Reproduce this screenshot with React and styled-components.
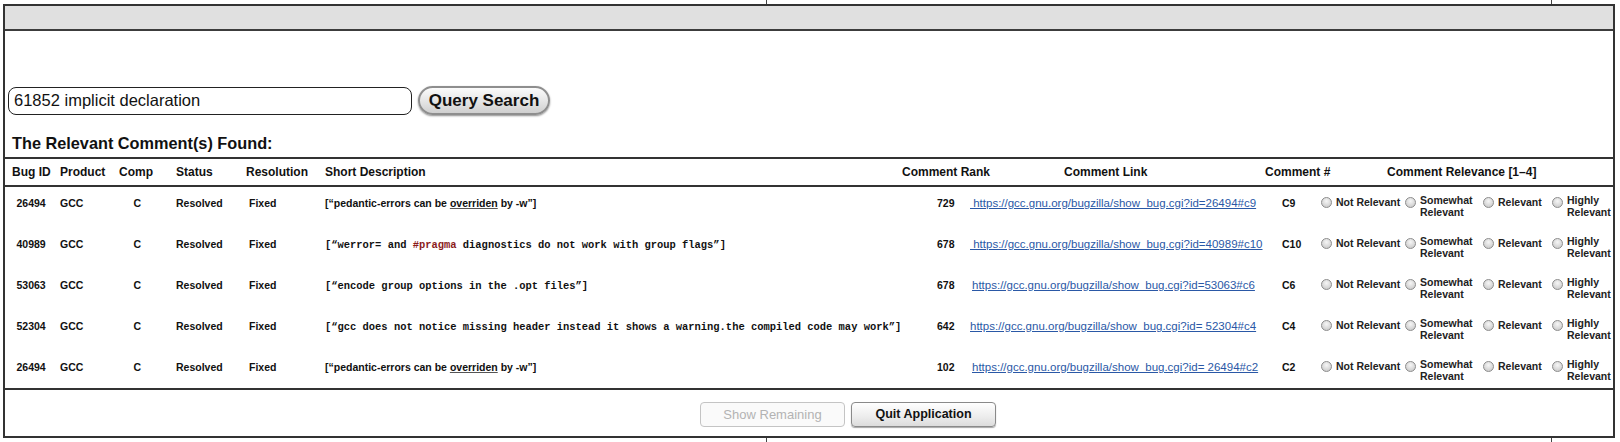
import React from "react";
import styled, { createGlobalStyle } from "styled-components";

const GlobalStyle = createGlobalStyle`
  html, body {
    margin: 0;
    padding: 0;
  }
  body {
    width: 1620px;
    height: 442px;
    overflow: hidden;
    background-color: #fff;
    background-image:
      linear-gradient(#444, #444),
      linear-gradient(#444, #444);
    background-size: 1px 100%, 1px 100%;
    background-position: 766px 0, 1551px 0;
    background-repeat: no-repeat;
    font-family: "Liberation Sans", Arial, Helvetica, sans-serif;
    color: #111;
  }
`;

const HEAD_COLS = "48px 59px 57px 70px 79px 577px 162px 201px 122px 1fr";
const ROW_COLS = "43.5px 73.5px 42.5px 73px 76px 612px 33px 312px 39px 1fr";

const Frame = styled.div`
  box-sizing: border-box;
  margin: 4px 0 0 3px;
  width: 1612px;
  height: 434px;
  border: 2px solid #333;
  background: #fff;
  display: flex;
  flex-direction: column;
`;

const TitleBar = styled.div`
  height: 23px;
  background: #e0e0e0;
  border-bottom: 2px solid #3c3c3c;
`;

const SearchRow = styled.div`
  display: flex;
  align-items: center;
  gap: 6px;
  margin-top: 55px;
  padding-left: 3px;
  height: 29px;
`;

const SearchInput = styled.input`
  box-sizing: border-box;
  width: 404px;
  height: 28px;
  border: 1px solid #222;
  border-radius: 8px;
  padding: 0 0 0 5px;
  font-family: "Liberation Sans", Arial, sans-serif;
  font-size: 16.5px;
  color: #111;
  outline: none;
`;

const PillButton = styled.button`
  box-sizing: border-box;
  height: 29px;
  width: 132px;
  border: 2px solid #8e8e8e;
  border-radius: 15px;
  background: linear-gradient(#fbfbfb, #e2e2e2 60%, #cfcfcf);
  box-shadow: 0 1px 2px rgba(0, 0, 0, 0.45);
  font-family: "Liberation Sans", Arial, sans-serif;
  font-weight: bold;
  font-size: 17px;
  color: #111;
  padding: 0;
`;

const Heading = styled.h3`
  margin: 19px 0 4px;
  padding-left: 7px;
  font-size: 16.3px;
  line-height: 19px;
  font-weight: bold;
`;

const Table = styled.div`
  border-top: 2px solid #333;
  border-bottom: 2px solid #333;
`;

const HeadRow = styled.div`
  display: grid;
  grid-template-columns: ${HEAD_COLS};
  align-items: center;
  height: 26px;
  padding-left: 7px;
  border-bottom: 2px solid #333;
  font-size: 12px;
  font-weight: bold;
  white-space: nowrap;
`;

const Row = styled.div`
  display: grid;
  grid-template-columns: ${ROW_COLS};
  align-items: start;
  height: 41px;
  box-sizing: border-box;
  padding: 10px 0 0 11.5px;
  font-size: 10.5px;
  line-height: 13px;
  font-weight: bold;
  white-space: nowrap;

  &:last-child {
    height: 36.5px;
  }
`;

const Cell = styled.div`
  padding-left: ${(p) => p.$pad || 0}px;
`;

const Mono = styled.span`
  font-family: "Liberation Mono", "Courier New", monospace;
  font-size: 10.45px;
`;

const Keyword = styled.span`
  color: #8b1c1c;
`;

const Under = styled.span`
  text-decoration: underline;
  text-decoration-color: #555;
`;

const Link = styled.a`
  font-weight: normal;
  font-size: 11.5px;
  color: #2a58a6;
  text-decoration: underline;
`;

const Relevance = styled.div`
  display: grid;
  grid-template-columns: 84px 78px 69px auto;
  margin-top: -1px;
`;

const Option = styled.label`
  display: flex;
  align-items: flex-start;
  gap: 4px;
`;

const Radio = styled.span`
  flex: none;
  box-sizing: border-box;
  width: 11px;
  height: 11px;
  margin-top: 1px;
  border-radius: 50%;
  border: 1px solid #8c8c8c;
  background: radial-gradient(circle at 50% 35%, #f6f6f6, #d2d2d2 70%, #bcbcbc);
`;

const OptionText = styled.span`
  font-size: 10.5px;
  line-height: 12px;
  color: #222;
  margin-top: ${(p) => (p.$two ? -2 : 0)}px;
`;

const Footer = styled.div`
  display: flex;
  gap: 6px;
  padding: 12px 0 0 695px;
`;

const FootButton = styled.button`
  box-sizing: border-box;
  width: 145px;
  height: 25px;
  border-radius: 4px;
  font-family: "Liberation Sans", Arial, sans-serif;
  padding: 0;
  border: ${(p) => (p.disabled ? "1px solid #c4c4c4" : "1.5px solid #8a8a8a")};
  background: ${(p) =>
    p.disabled ? "#fafafa" : "linear-gradient(#ffffff, #ececec 60%, #dcdcdc)"};
  box-shadow: ${(p) => (p.disabled ? "none" : "0 1px 1px rgba(0,0,0,0.35)")};
  color: ${(p) => (p.disabled ? "#b3b3b3" : "#111")};
  font-weight: ${(p) => (p.disabled ? "normal" : "bold")};
  font-size: ${(p) => (p.disabled ? "13px" : "12.5px")};
`;

const pedantic = (
  <>
    [“pedantic-errors can be <Under>overriden</Under> by -w”]
  </>
);

const rows = [
  {
    id: "26494",
    desc: pedantic,
    rank: "729",
    link: "\u00a0https://gcc.gnu.org/bugzilla/show_bug.cgi?id=26494#c9",
    num: "C9",
  },
  {
    id: "40989",
    desc: (
      <Mono>
        [“werror= and <Keyword>#pragma</Keyword> diagnostics do not work with
        group flags”]
      </Mono>
    ),
    rank: "678",
    link: "\u00a0https://gcc.gnu.org/bugzilla/show_bug.cgi?id=40989#c10",
    num: "C10",
  },
  {
    id: "53063",
    desc: <Mono>[“encode group options in the .opt files”]</Mono>,
    rank: "678",
    link: "https://gcc.gnu.org/bugzilla/show_bug.cgi?id=53063#c6",
    num: "C6",
    lpad: 2,
  },
  {
    id: "52304",
    desc: (
      <Mono>
        [“gcc does not notice missing header instead it shows a warning.the
        compiled code may work”]
      </Mono>
    ),
    rank: "642",
    link: "https://gcc.gnu.org/bugzilla/show_bug.cgi?id= 52304#c4",
    num: "C4",
  },
  {
    id: "26494",
    desc: pedantic,
    rank: "102",
    link: "https://gcc.gnu.org/bugzilla/show_bug.cgi?id= 26494#c2",
    num: "C2",
    lpad: 2,
  },
];

const options = [
  { lines: ["Not Relevant"] },
  { lines: ["Somewhat", "Relevant"] },
  { lines: ["Relevant"] },
  { lines: ["Highly", "Relevant"] },
];

function RelevanceCell() {
  return (
    <Relevance>
      {options.map((o, i) => (
        <Option key={i}>
          <Radio />
          <OptionText $two={o.lines.length > 1}>
            {o.lines.map((l, j) => (
              <div key={j}>{l}</div>
            ))}
          </OptionText>
        </Option>
      ))}
    </Relevance>
  );
}

export default function App() {
  return (
    <>
      <GlobalStyle />
      <Frame>
        <TitleBar />
        <SearchRow>
          <SearchInput defaultValue="61852 implicit declaration" />
          <PillButton>Query Search</PillButton>
        </SearchRow>
        <Heading>The Relevant Comment(s) Found:</Heading>
        <Table>
          <HeadRow>
            <div>Bug ID</div>
            <div>Product</div>
            <div>Comp</div>
            <div>Status</div>
            <div>Resolution</div>
            <div>Short Description</div>
            <div>Comment Rank</div>
            <div>Comment Link</div>
            <div>Comment #</div>
            <div>Comment Relevance [1–4]</div>
          </HeadRow>
          {rows.map((r, i) => (
            <Row key={i}>
              <Cell>{r.id}</Cell>
              <Cell>GCC</Cell>
              <Cell>C</Cell>
              <Cell>Resolved</Cell>
              <Cell>Fixed</Cell>
              <Cell>{r.desc}</Cell>
              <Cell>{r.rank}</Cell>
              <Cell $pad={r.lpad}>
                <Link href="#">{r.link}</Link>
              </Cell>
              <Cell>{r.num}</Cell>
              <RelevanceCell />
            </Row>
          ))}
        </Table>
        <Footer>
          <FootButton disabled>Show Remaining</FootButton>
          <FootButton>Quit Application</FootButton>
        </Footer>
      </Frame>
    </>
  );
}
